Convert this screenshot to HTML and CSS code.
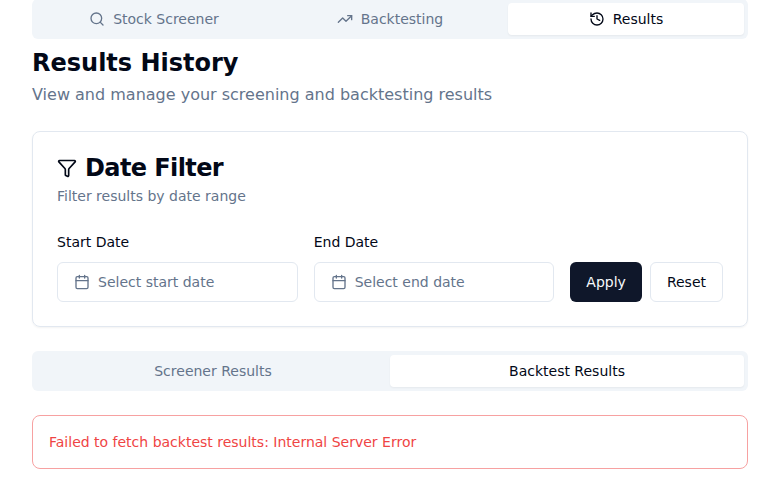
FILE: index.html
```html
<!DOCTYPE html>
<html lang="en">
<head>
<meta charset="utf-8">
<title>Results History</title>
<link rel="stylesheet" href="styles.css">
</head>
<body>
<main class="page">
  <nav class="tabs tabs-main">
    <button class="tab"><svg class="icon" viewBox="0 0 24 24"><circle cx="11" cy="11" r="8"/><path d="m21 21-4.3-4.3"/></svg>Stock Screener</button>
    <button class="tab"><svg class="icon" viewBox="0 0 24 24"><path d="M22 7 13.5 15.5 8.5 10.5 2 17"/><path d="M16 7h6v6"/></svg>Backtesting</button>
    <button class="tab active"><svg class="icon" viewBox="0 0 24 24"><path d="M3 12a9 9 0 1 0 9-9 9.75 9.75 0 0 0-6.74 2.74L3 8"/><path d="M3 3v5h5"/><path d="M12 7v5l4 2"/></svg>Results</button>
  </nav>
  <header class="heading">
    <h1>Results History</h1>
    <p>View and manage your screening and backtesting results</p>
  </header>
  <section class="card">
    <h2><svg class="icon icon-lg" viewBox="0 0 24 24"><path d="M10 20a1 1 0 0 0 .553.895l2 1A1 1 0 0 0 14 21v-7a2 2 0 0 1 .517-1.341L21.74 4.67A1 1 0 0 0 21 3H3a1 1 0 0 0-.742 1.67l7.225 7.989A2 2 0 0 1 10 14z"/></svg>Date Filter</h2>
    <p class="description">Filter results by date range</p>
    <div class="filters">
      <div class="field">
        <label>Start Date</label>
        <button class="button date"><svg class="icon" viewBox="0 0 24 24"><path d="M8 2v4M16 2v4"/><rect x="3" y="4" width="18" height="18" rx="2"/><path d="M3 10h18"/></svg>Select start date</button>
      </div>
      <div class="field">
        <label>End Date</label>
        <button class="button date"><svg class="icon" viewBox="0 0 24 24"><path d="M8 2v4M16 2v4"/><rect x="3" y="4" width="18" height="18" rx="2"/><path d="M3 10h18"/></svg>Select end date</button>
      </div>
      <div class="actions">
        <button class="button primary">Apply</button>
        <button class="button">Reset</button>
      </div>
    </div>
  </section>
  <div class="tabs tabs-results">
    <button class="tab">Screener Results</button>
    <button class="tab active">Backtest Results</button>
  </div>
  <div class="alert">Failed to fetch backtest results: Internal Server Error</div>
</main>
</body>
</html>
```
FILE: styles.css
```css
* { box-sizing: border-box; }
body {
  margin: 0;
  background: #fff;
  color: #020817;
  font: 14px/20px "DejaVu Sans", sans-serif;
  overflow: hidden;
}
h1, h2, p { margin: 0; }
button { font: inherit; color: inherit; margin: 0; }
.page { padding: 0 32px; }
.icon {
  width: 16px;
  height: 16px;
  flex: none;
  fill: none;
  stroke: currentColor;
  stroke-width: 2;
  stroke-linecap: round;
  stroke-linejoin: round;
}
.icon-lg { width: 20px; height: 20px; }
.tabs {
  display: grid;
  height: 40px;
  padding: 4px;
  border-radius: 6px;
  background: #f1f5f9;
  color: #64748b;
}
.tabs-main { grid-template-columns: repeat(3, 1fr); margin-top: -1px; }
.tabs-results { grid-template-columns: repeat(2, 1fr); margin-top: 24px; }
.tab {
  display: flex;
  align-items: center;
  justify-content: center;
  gap: 8px;
  padding: 0 12px;
  border: 0;
  border-radius: 4px;
  background: transparent;
}
.tab.active {
  background: #fff;
  color: #020817;
  box-shadow: 0 1px 2px rgba(0, 0, 0, .05);
}
.heading { margin-top: 8px; }
.heading h1 { font-size: 24px; line-height: 32px; }
.heading p { margin-top: 4px; font-size: 16px; line-height: 24px; color: #64748b; }
.card {
  margin-top: 24px;
  padding: 24px;
  border: 1px solid #e2e8f0;
  border-radius: 8px;
  box-shadow: 0 1px 2px rgba(0, 0, 0, .05);
}
.card h2 {
  display: flex;
  align-items: center;
  gap: 8px;
  font-size: 24px;
  line-height: 24px;
  letter-spacing: -.025em;
}
.description { margin-top: 6px; color: #64748b; }
.filters {
  display: grid;
  grid-template-columns: 1fr 1fr auto;
  align-items: end;
  gap: 16px;
  margin-top: 26px;
}
.field label { display: block; margin-bottom: 10px; }
.button {
  height: 40px;
  padding: 0 16px;
  border: 1px solid #e2e8f0;
  border-radius: 6px;
  background: #fff;
}
.date {
  display: flex;
  align-items: center;
  gap: 8px;
  width: 100%;
  color: #64748b;
}
.actions { display: flex; gap: 8px; }
.primary { border: 0; background: #0f172a; color: #f8fafc; }
.alert {
  margin-top: 24px;
  padding: 16px;
  border: 1px solid #f7a1a1;
  border-radius: 8px;
  color: #ef4444;
}
```
